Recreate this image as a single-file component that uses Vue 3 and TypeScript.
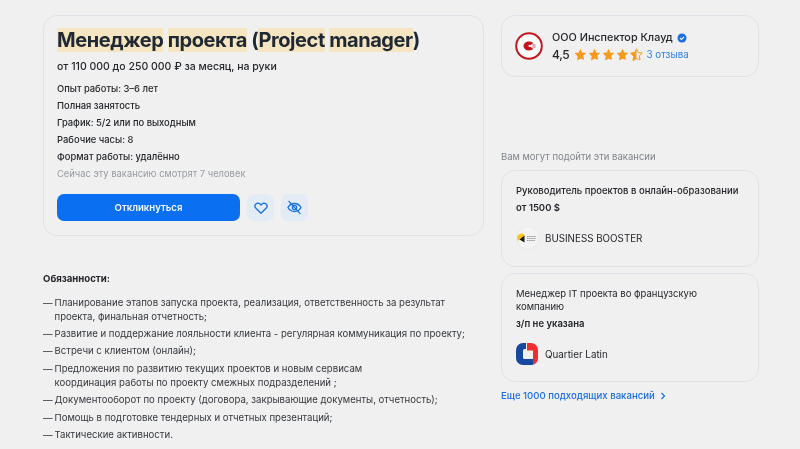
<script setup lang="ts">
const facts = [
  'Опыт работы: 3–6 лет',
  'Полная занятость',
  'График: 5/2 или по выходным',
  'Рабочие часы: 8',
  'Формат работы: удалённо'
]

const duties = [
  ['Планирование этапов запуска проекта, реализация, ответственность за результат', 'проекта, финальная отчетность;'],
  ['Развитие и поддержание лояльности клиента - регулярная коммуникация по проекту;'],
  ['Встречи с клиентом (онлайн);'],
  ['Предложения по развитию текущих проектов и новым сервисам', 'координация работы по проекту смежных подразделений ;'],
  ['Документооборот по проекту (договора, закрывающие документы, отчетность);'],
  ['Помощь в подготовке тендерных и отчетных презентаций;'],
  ['Тактические активности.']
]

const star = 'M8 1l2.1 4.6 5 .6-3.7 3.4 1 4.9L8 13.1 3.600 15.500l1-4.900L.9 6.200l5-.6z'
</script>

<template>
  <div class="page">
    <main class="left">
      <section class="card job">
        <h1><mark>Менеджер</mark> <mark>проекта</mark> (<mark>Project</mark> <mark>manager</mark>)</h1>
        <p class="salary">от 110 000 до 250 000 ₽ за месяц, на руки</p>
        <ul class="facts">
          <li v-for="fact in facts" :key="fact">{{ fact }}</li>
          <li class="watching">Сейчас эту вакансию смотрят 7 человек</li>
        </ul>
        <div class="actions">
          <button class="apply">Откликнуться</button>
          <button class="icon-btn" aria-label="В избранное">
            <svg width="14" height="14" viewBox="0 0 16 16" fill="none" stroke="#1a6fe0" stroke-width="1.500" stroke-linejoin="round">
              <path d="M8 14 2.200 8.300a3.400 3.400 0 0 1 0-4.800 3.300 3.300 0 0 1 4.700 0L8 4.600l1.100-1.100a3.300 3.300 0 0 1 4.700 0 3.400 3.400 0 0 1 0 4.800z" />
            </svg>
          </button>
          <button class="icon-btn" aria-label="Скрыть">
            <svg width="15" height="15" viewBox="0 0 16 16" fill="none" stroke="#1a6fe0" stroke-width="1.400" stroke-linecap="round">
              <path d="M1 8c1.600-2.800 4-4.300 7-4.300s5.400 1.500 7 4.300c-1.600 2.800-4 4.300-7 4.300S2.600 10.800 1 8z" />
              <circle cx="8" cy="8" r="2.300" />
              <path d="M2 1.500l12 13" />
            </svg>
          </button>
        </div>
      </section>

      <section class="duties">
        <h2>Обязанности:</h2>
        <ul>
          <li v-for="duty in duties" :key="duty[0]">
            <span v-for="line in duty" :key="line" class="line">{{ line }}</span>
          </li>
        </ul>
      </section>
    </main>

    <aside class="right">
      <section class="card company">
        <svg class="company-logo" width="28" height="28" viewBox="0 0 28 28">
          <circle cx="14" cy="14" r="12.800" fill="#fff" stroke="#c3171d" stroke-width="2" />
          <path d="M14 9.500c1.800 0 3.300.6 4.300 1.700l-3 2a1.100 1.100 0 1 0 0 1.600l3 2c-1 1.100-2.500 1.700-4.300 1.700-3.100 0-5.500-2-5.500-4.500s2.400-4.500 5.500-4.500z" fill="#c3171d" />
          <path d="M17.500 13h3M17.500 15h3" stroke="#c3171d" stroke-width="1.200" stroke-dasharray="1.200 .5" />
        </svg>
        <div>
          <div class="company-name">
            ООО Инспектор Клауд
            <svg width="10" height="10" viewBox="0 0 10 10">
              <circle cx="5" cy="5" r="4.500" fill="#1a6fe0" />
              <path d="M3 5l1.500 1.500L7 3.800" fill="none" stroke="#fff" stroke-width="1.100" />
            </svg>
          </div>
          <div class="rating">
            <span class="score">4,5</span>
            <span class="stars">
              <svg v-for="n in 4" :key="n" width="13" height="13" viewBox="0 0 16 16"><path :d="star" fill="#f59a1c" /></svg>
              <svg width="13" height="13" viewBox="0 0 16 16">
                <path d="M8 1v12.100L3.600 15.500l1-4.900L.9 6.200l5-.6z" fill="#f59a1c" />
                <path :d="star" fill="none" stroke="#f59a1c" stroke-width="1.200" />
              </svg>
            </span>
            <a class="reviews">3 отзыва</a>
          </div>
        </div>
      </section>

      <p class="suggest">Вам могут подойти эти вакансии</p>

      <section class="card vacancy first">
        <p class="vacancy-title">Руководитель проектов в онлайн-образовании</p>
        <p class="vacancy-pay">от 1500 $</p>
        <div class="employer">
          <svg width="24" height="24" viewBox="0 0 24 24">
            <circle cx="12" cy="12" r="11.500" fill="#f3f3f3" stroke="#e9e9e9" />
            <path d="M1 12a4.500 4.500 0 0 1 7.500-3.300L7 11.500 3.500 13.500 2 15z" fill="#f5c518" />
            <path d="M8.500 9.500v7L3.500 13.500z" fill="#1c1c1c" />
            <path d="M11 10.500h9M11 12.500h9M11 14.500h8" stroke="#8d8d8d" stroke-width=".9" stroke-dasharray="1.500 .6" />
          </svg>
          <span>BUSINESS BOOSTER</span>
        </div>
      </section>

      <section class="card vacancy second">
        <p class="vacancy-title">Менеджер IT проекта во французскую компанию</p>
        <p class="vacancy-pay">з/п не указана</p>
        <div class="employer">
          <svg width="22" height="22" viewBox="0 0 22 22">
            <path d="M10 0H7a7 7 0 0 0-7 7v8a7 7 0 0 0 7 7h8a7 7 0 0 0 2-.3V16H8.500A1.500 1.500 0 0 1 7 14.500v-7A1.500 1.500 0 0 1 8.500 6H10z" fill="#17479e" />
            <path d="M11 0h4a7 7 0 0 1 7 7v8a7 7 0 0 1-5 6.700V7.500h-6z" fill="#ee2e30" />
          </svg>
          <span>Quartier Latin</span>
        </div>
      </section>

      <a class="more">Еще 1000 подходящих вакансий
        <svg width="6" height="8" viewBox="0 0 6 8" fill="none" stroke="#1a6fe0" stroke-width="1.200"><path d="M1.500 1l3 3-3 3" /></svg>
      </a>
    </aside>
  </div>
</template>

<style>
body {
  margin: 0;
  background: #f0f0f0;
}
</style>

<style scoped>
.page {
  display: flex;
  gap: 17px;
  width: 800px;
  height: 449px;
  padding: 15px 0 0 43px;
  box-sizing: border-box;
  overflow: hidden;
  font-family: Inter, "Noto Sans", sans-serif;
  font-size: 9.500px;
  color: #23262b;
  background: #f0f0f0;
  filter: blur(0.35px);
}

p, ul, h1, h2 {
  margin: 0;
  padding: 0;
}

ul {
  list-style: none;
}

.left {
  width: 441px;
}

.right {
  width: 258px;
}

.card {
  box-sizing: border-box;
  border: 1px solid #dfe2e8;
  border-radius: 14px;
}

.job {
  height: 221px;
  padding: 10px 13px;
}

h1 {
  font-size: 20px;
  line-height: 28px;
  font-weight: 700;
  letter-spacing: -0.42px;
  color: #1f2833;
}

mark {
  background: #f5e6c1;
  color: inherit;
}

.salary {
  margin-top: 4px;
  font-size: 10.500px;
  line-height: 18px;
  font-weight: 500;
}

.facts {
  margin-top: 4px;
  font-size: 9.400px;
  font-weight: 500;
}

.facts li {
  height: 17px;
  line-height: 17px;
}

.facts .watching {
  color: #969ba3;
  font-weight: 400;
}

.actions {
  display: flex;
  gap: 7px;
  margin-top: 12px;
}

button {
  border: none;
  padding: 0;
  font-family: inherit;
}

.apply {
  width: 183px;
  height: 27px;
  border-radius: 7px;
  background: #0a6ff0;
  color: #f4f8ff;
  font-size: 9.600px;
  font-weight: 600;
}

.icon-btn {
  display: flex;
  align-items: center;
  justify-content: center;
  width: 27px;
  height: 27px;
  border-radius: 7px;
  background: #e3ebf5;
}

.duties {
  margin-top: 36px;
}

h2 {
  font-size: 9.600px;
  line-height: 14px;
  font-weight: 700;
}

.duties ul {
  margin-top: 9.500px;
  font-size: 9.600px;
  color: #33373d;
}

.duties li {
  position: relative;
  padding-left: 11.500px;
  margin-bottom: 3px;
}

.duties li::before {
  content: "—";
  position: absolute;
  left: 0;
  top: 0;
  line-height: 14.300px;
}

.line {
  display: block;
  line-height: 14.300px;
}

.company {
  display: flex;
  align-items: center;
  gap: 9px;
  height: 62px;
  padding: 0 13px;
}

.company-name {
  display: flex;
  align-items: center;
  gap: 4px;
  font-size: 10.800px;
  line-height: 15px;
  font-weight: 500;
}

.rating {
  display: flex;
  align-items: center;
  margin-top: 2px;
}

.score {
  font-size: 12px;
  font-weight: 500;
  letter-spacing: -0.3px;
}

.stars {
  display: flex;
  gap: 1px;
  margin: 0 3.500px 0 4.500px;
}

.reviews {
  font-size: 9.800px;
  color: #2f80e8;
}

.suggest {
  margin-top: 72.500px;
  color: #80858d;
  line-height: 14px;
}

.vacancy {
  padding: 0 14px;
}

.first {
  height: 97px;
  margin-top: 6.500px;
}

.second {
  height: 109px;
  margin-top: 6px;
}

.vacancy-title {
  margin-top: 12.500px;
  font-size: 9.500px;
  line-height: 13px;
  font-weight: 500;
}

.second .vacancy-title {
  font-weight: 400;
}

.vacancy-pay {
  margin-top: 4.500px;
  line-height: 14px;
  font-weight: 600;
}

.employer {
  display: flex;
  align-items: center;
  gap: 5px;
  margin-top: 11px;
  font-size: 9.800px;
}

.second .employer {
  gap: 7px;
  margin-top: 12px;
}

.more {
  display: flex;
  align-items: center;
  gap: 5px;
  margin-top: 6.500px;
  font-size: 9.600px;
  line-height: 14px;
  color: #1a6fe0;
  font-weight: 500;
}
</style>
